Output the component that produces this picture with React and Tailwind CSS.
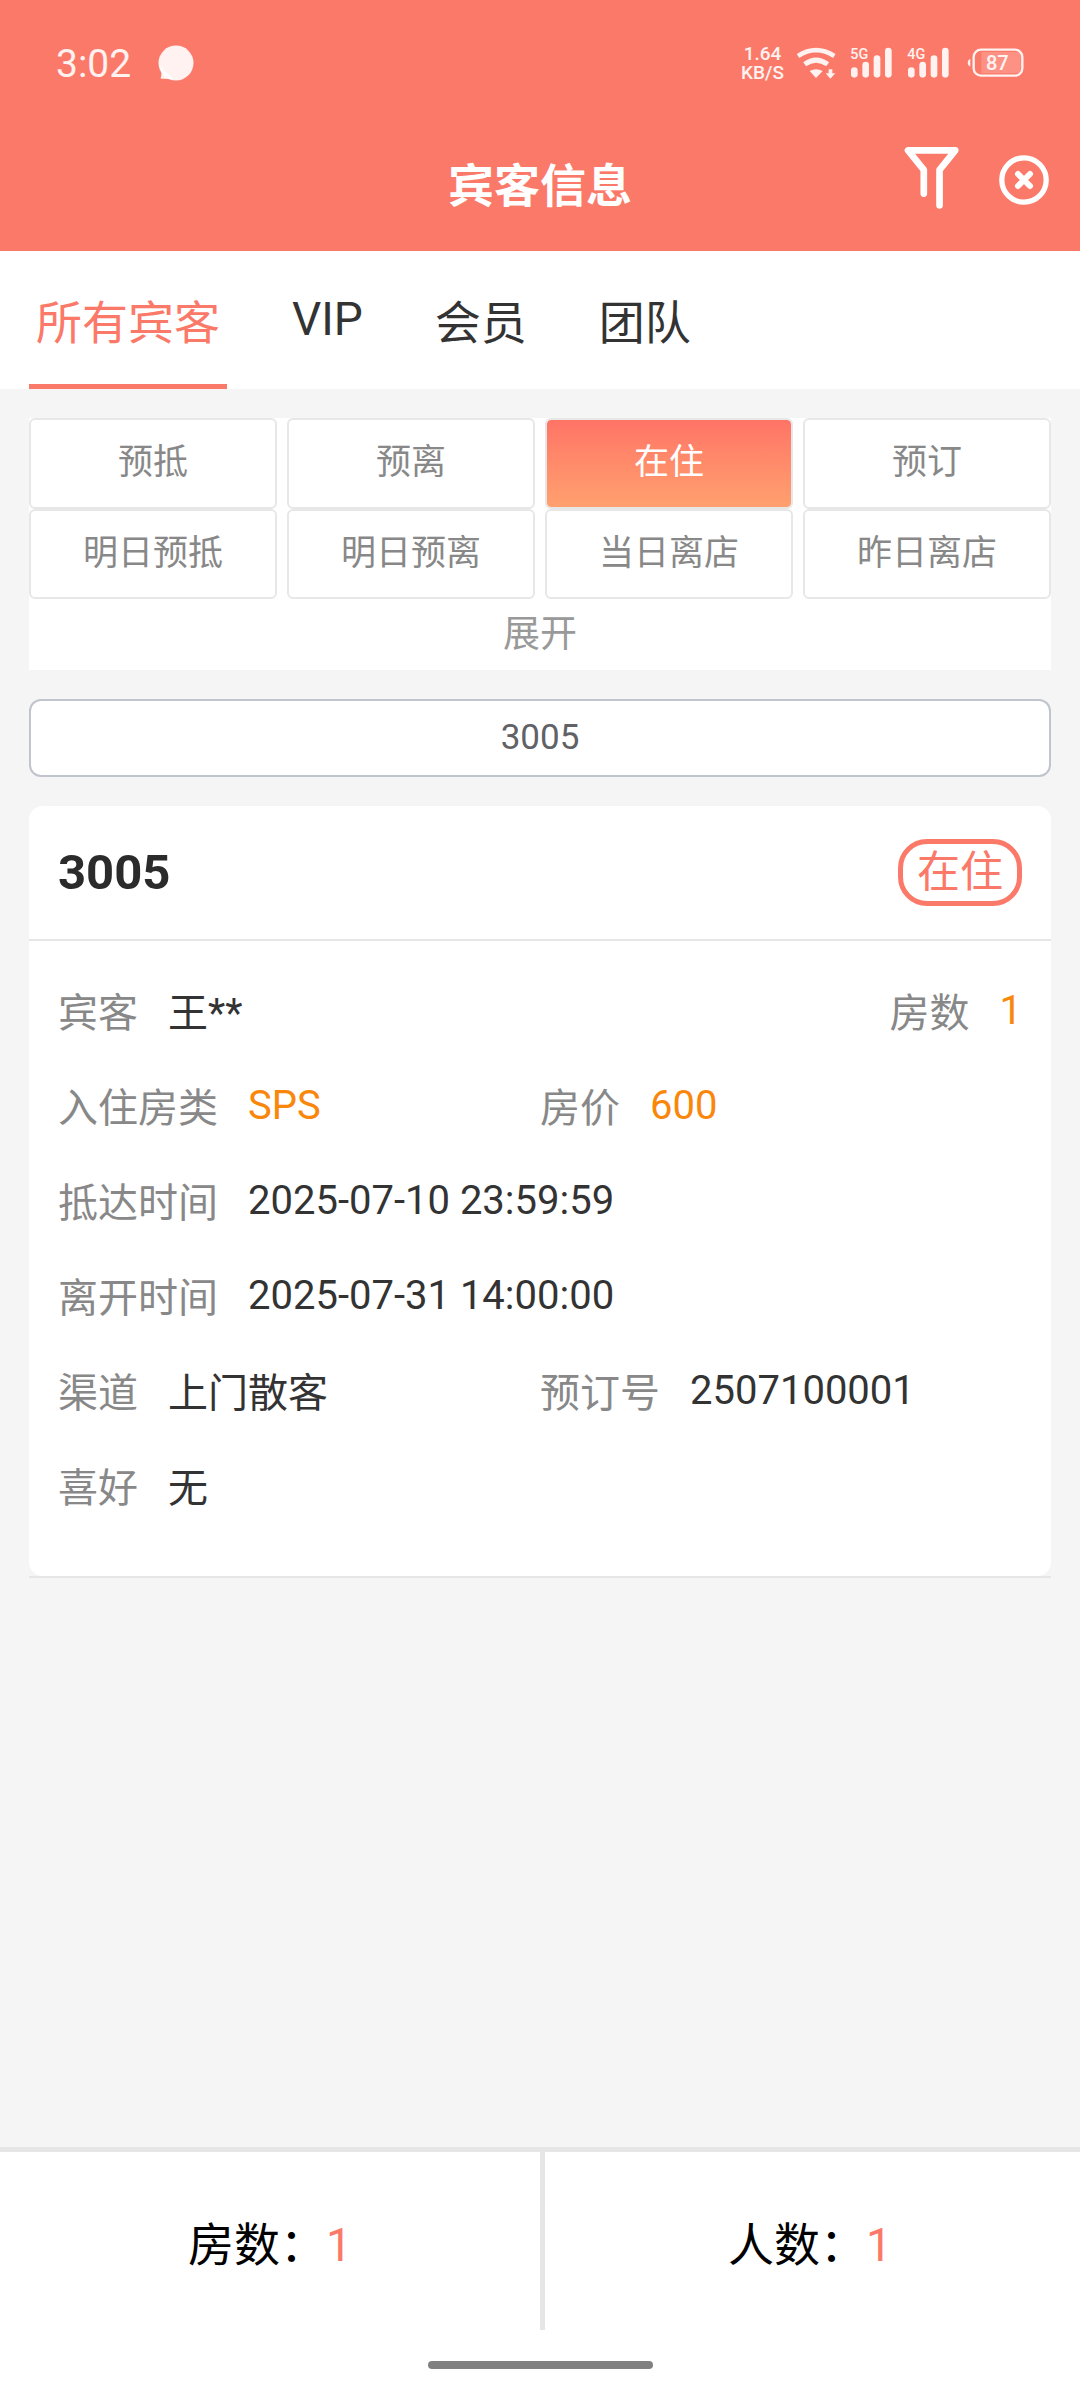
import React from "react";

const TABS = ["所有宾客", "VIP", "会员", "团队"];
const FILTERS = ["预抵", "预离", "在住", "预订", "明日预抵", "明日预离", "当日离店", "昨日离店"];

function Signal({ label }) {
  return (
    <svg viewBox="390 82 129 93" className="h-[31px] w-[43px]" fill="currentColor" aria-hidden="true">
      <rect x="393" y="143" width="20" height="31" rx="10" />
      <rect x="427" y="126" width="20" height="48" rx="10" />
      <rect x="461" y="107" width="20" height="67" rx="10" />
      <rect x="495" y="84" width="20" height="90" rx="10" />
      <text x="391" y="117" fontSize="43" fontWeight="500">{label}</text>
    </svg>
  );
}

function StatusBar() {
  return (
    <div className="flex h-[125px] items-center justify-between px-14 text-white/90">
      <div className="flex items-center gap-[27px]">
        <span className="pt-1 text-[39px] leading-none">3:02</span>
        <svg viewBox="0 0 36 36" className="size-9" fill="currentColor" aria-hidden="true">
          <circle cx="18" cy="18" r="17.500" />
          <path d="M1 20L3.500 27Q3.500 31 2.500 33.500L16 34.500Z" />
        </svg>
      </div>
      <div className="flex items-center gap-[14px]">
        <p className="text-center text-[19px] leading-[19px] font-medium">
          1.64
          <br />
          KB/S
        </p>
        <svg viewBox="225 81 120 96" className="-ml-0.5 h-8 w-10" fill="none" stroke="currentColor" strokeWidth="14" aria-hidden="true">
          <path d="M231 108Q285 73 340 108" />
          <path d="M251 133Q285 108 320 133" strokeWidth="15" />
          <path d="M266 153Q285 143 305 153L285 174Z" fill="currentColor" stroke="none" />
          <path d="M323 148H334V160H343L328 176L314 160H323Z" fill="currentColor" stroke="none" />
        </svg>
        <Signal label="5G" />
        <Signal label="4G" />
        <svg viewBox="742 85 171 87" className="ml-[3px] h-[29px] w-[57px]" fill="currentColor" aria-hidden="true">
          <path d="M752 117V141Q744 138 744 129T752 117Z" />
          <rect x="762" y="90" width="146" height="78" rx="22" fill="none" stroke="currentColor" strokeWidth="7" />
          <path d="M785 97H892Q903 97 903 110V148Q903 161 892 161H785Z" opacity="0.2" />
          <text x="833" y="152" fontSize="60" fontWeight="500" textAnchor="middle">87</text>
        </svg>
      </div>
    </div>
  );
}

function TitleBar() {
  return (
    <div className="grid h-[126px] grid-cols-[1fr_auto_1fr] items-center">
      <h1 className="col-start-2 pb-1 text-[46px] leading-none font-bold text-white">宾客信息</h1>
      <div className="flex items-center justify-end gap-[31px] pr-[31px] pb-4 text-white">
        <button type="button" aria-label="筛选">
          <svg viewBox="527 366 218 224" className="h-[75px] w-[73px]" fill="none" stroke="currentColor" strokeWidth="20" strokeLinecap="round" strokeLinejoin="round">
            <path d="M613 517V446L566 388H707L660 446V552" />
          </svg>
        </button>
        <button type="button" aria-label="关闭">
          <svg viewBox="0 0 50 50" className="size-[50px]" fill="none" stroke="currentColor" strokeWidth="5.300" strokeLinecap="round">
            <circle cx="25" cy="25" r="22.200" />
            <path d="M19 19L31 31M31 19L19 31" strokeWidth="6" />
          </svg>
        </button>
      </div>
    </div>
  );
}

function Field({ label, value, tone = "text-[#333333]" }) {
  return (
    <div className="flex items-center gap-[30px]">
      <dt className="text-[#888888]">{label}</dt>
      <dd className={tone}>{value}</dd>
    </div>
  );
}

function GuestCard() {
  const orange = "text-[#f9870b]";
  return (
    <article className="mt-[29px] border-b-2 border-[#e6e6e6]">
      <div className="rounded-[14px] bg-white">
        <header className="flex items-center justify-between border-b-2 border-[#e6e6e6] px-[29px] py-[33px]">
          <h2 className="text-[49px] leading-none font-bold text-[#2b2b2b]">3005</h2>
          <span className="rounded-[29px] border-5 border-[#fb7969] px-[14px] text-[43px] leading-[57px] text-[#fb7969]">在住</span>
        </header>
        <dl className="flex flex-col gap-[37px] px-[29px] pt-10 pb-[62px] text-[40px] [line-height:normal]">
          <div className="flex items-center justify-between">
            <Field label="宾客" value="王**" />
            <Field label="房数" value="1" tone={orange} />
          </div>
          <div className="grid grid-cols-2">
            <Field label="入住房类" value="SPS" tone={orange} />
            <Field label="房价" value="600" tone={orange} />
          </div>
          <Field label="抵达时间" value="2025-07-10 23:59:59" />
          <Field label="离开时间" value="2025-07-31 14:00:00" />
          <div className="grid grid-cols-2">
            <Field label="渠道" value="上门散客" />
            <Field label="预订号" value="2507100001" />
          </div>
          <Field label="喜好" value="无" />
        </dl>
      </div>
    </article>
  );
}

export default function App() {
  const [tab, setTab] = React.useState("所有宾客");
  const [filter, setFilter] = React.useState("在住");
  return (
    <div className="flex min-h-screen flex-col bg-[#f5f5f5] font-[Roboto,'Noto_Sans_CJK_SC',sans-serif]">
      <header className="bg-[#fb7969]">
        <StatusBar />
        <TitleBar />
      </header>

      <nav className="flex h-[138px] gap-[58px] bg-white px-[29px]">
        {TABS.map((name) => (
          <button
            key={name}
            type="button"
            onClick={() => setTab(name)}
            className={
              "border-t-3 border-b-5 border-t-transparent px-[7px] text-[46px] [line-height:normal] " +
              (name === tab ? "border-b-[#fb7969] text-[#fb7969]" : "border-b-transparent text-[#333333]")
            }
          >
            {name}
          </button>
        ))}
      </nav>

      <main className="flex-1 p-[29px]">
        <section className="bg-white">
          <div className="grid grid-cols-4 grid-rows-[91px_90px] gap-x-[10px]">
            {FILTERS.map((name) => (
              <button
                key={name}
                type="button"
                onClick={() => setFilter(name)}
                className={
                  "rounded-[6px] border-2 border-[#e7e7e7] bg-clip-padding pb-0.5 text-[35px] leading-none " +
                  (name === filter ? "bg-linear-to-b from-[#ff7466] to-[#ffa06f] text-white" : "text-[#888888]")
                }
              >
                {name}
              </button>
            ))}
          </div>
          <button type="button" className="block h-[71px] w-full text-[37px] leading-none text-[#999999]">展开</button>
        </section>

        <input
          type="text"
          aria-label="房号"
          defaultValue="3005"
          className="mt-[29px] block h-[78px] w-full rounded-[12px] border-2 border-[#c0c4cc] bg-white pb-0.5 text-center text-[35px] text-[#606266]"
        />

        <GuestCard />
      </main>

      <footer className="border-t-5 border-[#e6e6e6] bg-white">
        <div className="grid h-[178px] grid-cols-2 text-[46px] [line-height:normal] text-black">
          <div className="flex items-center justify-center">
            <p>
              房数：<span className="text-[#fb7969]">1</span>
            </p>
          </div>
          <div className="flex items-center justify-center border-l-5 border-[#e6e6e6] pr-[5px]">
            <p>
              人数：<span className="text-[#fb7969]">1</span>
            </p>
          </div>
        </div>
        <div className="flex h-[70px] items-center justify-center">
          <div className="h-2 w-[225px] rounded-full bg-[#808080]" />
        </div>
      </footer>
    </div>
  );
}
